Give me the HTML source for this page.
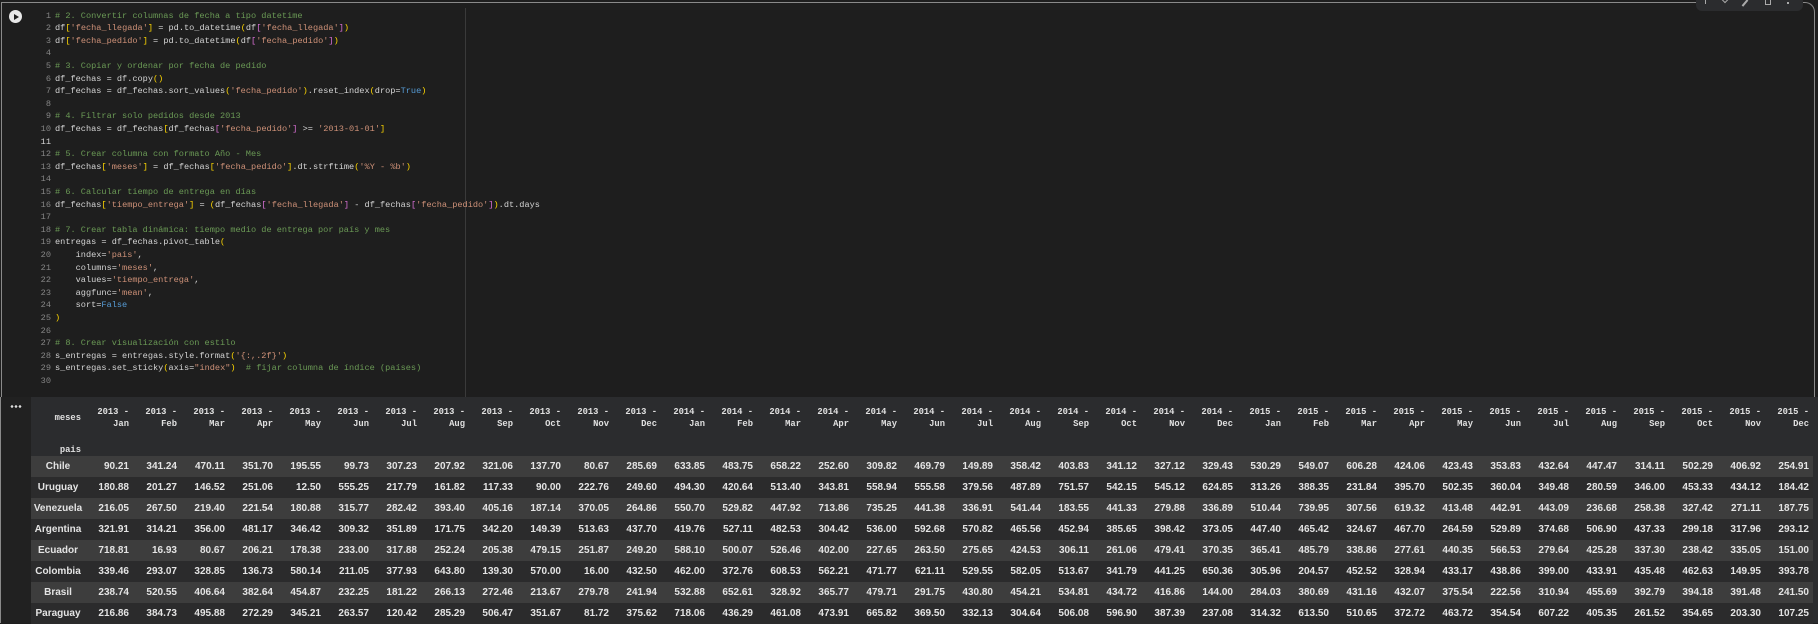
<!DOCTYPE html>
<html><head><meta charset="utf-8">
<style>
*{margin:0;padding:0;box-sizing:border-box}
body{width:1818px;height:623px;background:#1e1e1e;overflow:hidden;position:relative;font-family:"Liberation Sans",sans-serif}
.cell{position:absolute;left:1px;top:2px;width:1814px;height:395px;border:1px solid #8a8a8a;border-bottom:none;border-radius:0 10px 0 0;background:#1e1e1e}
.tb{position:absolute;left:1696px;top:0;width:107px;height:11px;background:#2b2c2e;border-radius:0 0 6px 6px}
.tb span{position:absolute;top:-1px;width:6px;height:6px;border:1.2px solid #aaa;border-top:none}
.run{position:absolute;left:9px;top:10px;width:13px;height:13px;border-radius:50%;background:#e8e8e8}
.run:after{content:"";position:absolute;left:5px;top:3.5px;border-left:5px solid #1e1e1e;border-top:3px solid transparent;border-bottom:3px solid transparent}
.ruler{position:absolute;left:465px;top:8px;width:1px;height:389px;background:#3a3a3a}
.code{position:absolute;left:30px;top:9.7px;font-family:"Liberation Mono",monospace;font-size:8.6px;line-height:12.6px;color:#d4d4d4;white-space:pre}
.ln{display:inline-block;width:21px;text-align:right;color:#858585;margin-right:4px}
.cur{color:#d4d4d4}
.c{color:#6a9955}.s{color:#ce9178}.y{color:#ffd700}.p{color:#da70d6}.b{color:#179fff}.k{color:#569cd6}.f{color:#dcdcaa}
.out{position:absolute;left:0;top:397px;width:1818px;height:226px;background:#212121;border-left:1px solid #8a8a8a}
.dots{position:absolute;left:10px;top:405px;width:12px;height:3px;background:radial-gradient(circle,#ddd 1.2px,transparent 1.4px) 0 0/4px 3px repeat-x}
table{position:absolute;left:31px;top:397px;border-collapse:collapse;background:#2b2c2e}
th,td{padding:0 4px 0 0;text-align:right}
thead th{font-family:"Liberation Mono",monospace;font-size:8.8px;font-weight:bold;color:#e0e0e0;width:48px;vertical-align:top;line-height:12px;padding-top:9px;height:58px}
thead th.ix{width:54px;padding-top:0;vertical-align:top}
tbody td,tbody th{height:21px;font-size:10px;font-weight:bold;color:#e4e4e4}
tbody th{text-align:center;padding:0;width:54px}
tbody tr:nth-child(odd){background:#3d3d3d}
tbody tr:nth-child(even){background:#2b2b2c}
.sb{position:absolute;left:1813px;top:397px;width:5px;height:226px;background:#2b2c2e}
</style></head><body>
<div class="cell"></div>
<div class="tb"><span style="left:9px;border:none;width:1px;background:#aaa;height:5px"></span><span style="left:26px;transform:rotate(45deg);top:-4px"></span><span style="left:48px;border:none;width:2px;height:8px;background:#aaa;transform:rotate(40deg);top:-1px"></span><span style="left:69px;height:5px;top:0"></span><span style="left:91px;border:none;width:2px;height:2px;background:#aaa;top:2px"></span></div>
<div class="run"></div>
<div class="ruler"></div>
<div class="code"><span class="ln">1</span><span class="c"># 2. Convertir columnas de fecha a tipo datetime</span>
<span class="ln">2</span>df<span class="y">[</span><span class="s">'fecha_llegada'</span><span class="y">]</span> = pd.to_datetime<span class="y">(</span>df<span class="p">[</span><span class="s">'fecha_llegada'</span><span class="p">]</span><span class="y">)</span>
<span class="ln">3</span>df<span class="y">[</span><span class="s">'fecha_pedido'</span><span class="y">]</span> = pd.to_datetime<span class="y">(</span>df<span class="p">[</span><span class="s">'fecha_pedido'</span><span class="p">]</span><span class="y">)</span>
<span class="ln">4</span>
<span class="ln">5</span><span class="c"># 3. Copiar y ordenar por fecha de pedido</span>
<span class="ln">6</span>df_fechas = df.copy<span class="y">()</span>
<span class="ln">7</span>df_fechas = df_fechas.sort_values<span class="y">(</span><span class="s">'fecha_pedido'</span><span class="y">)</span>.reset_index<span class="y">(</span>drop=<span class="k">True</span><span class="y">)</span>
<span class="ln">8</span>
<span class="ln">9</span><span class="c"># 4. Filtrar solo pedidos desde 2013</span>
<span class="ln">10</span>df_fechas = df_fechas<span class="y">[</span>df_fechas<span class="p">[</span><span class="s">'fecha_pedido'</span><span class="p">]</span> &gt;= <span class="s">'2013-01-01'</span><span class="y">]</span>
<span class="ln cur">11</span>
<span class="ln">12</span><span class="c"># 5. Crear columna con formato Año - Mes</span>
<span class="ln">13</span>df_fechas<span class="y">[</span><span class="s">'meses'</span><span class="y">]</span> = df_fechas<span class="y">[</span><span class="s">'fecha_pedido'</span><span class="y">]</span>.dt.strftime<span class="y">(</span><span class="s">'%Y - %b'</span><span class="y">)</span>
<span class="ln">14</span>
<span class="ln">15</span><span class="c"># 6. Calcular tiempo de entrega en días</span>
<span class="ln">16</span>df_fechas<span class="y">[</span><span class="s">'tiempo_entrega'</span><span class="y">]</span> = <span class="y">(</span>df_fechas<span class="p">[</span><span class="s">'fecha_llegada'</span><span class="p">]</span> - df_fechas<span class="p">[</span><span class="s">'fecha_pedido'</span><span class="p">]</span><span class="y">)</span>.dt.days
<span class="ln">17</span>
<span class="ln">18</span><span class="c"># 7. Crear tabla dinámica: tiempo medio de entrega por país y mes</span>
<span class="ln">19</span>entregas = df_fechas.pivot_table<span class="y">(</span>
<span class="ln">20</span>    index=<span class="s">'pais'</span>,
<span class="ln">21</span>    columns=<span class="s">'meses'</span>,
<span class="ln">22</span>    values=<span class="s">'tiempo_entrega'</span>,
<span class="ln">23</span>    aggfunc=<span class="s">'mean'</span>,
<span class="ln">24</span>    sort=<span class="k">False</span>
<span class="ln">25</span><span class="y">)</span>
<span class="ln">26</span>
<span class="ln">27</span><span class="c"># 8. Crear visualización con estilo</span>
<span class="ln">28</span>s_entregas = entregas.style.format<span class="y">(</span><span class="s">'{:,.2f}'</span><span class="y">)</span>
<span class="ln">29</span>s_entregas.set_sticky<span class="y">(</span>axis=<span class="s">"index"</span><span class="y">)</span>  <span class="c"># fijar columna de índice (países)</span>
<span class="ln">30</span></div>
<div class="out"></div>
<div class="dots"></div>
<table>
<thead><tr><th class="ix"><div style="margin-top:15px">meses</div><div style="margin-top:20px">pais</div></th>
<th>2013 -<br>Jan</th><th>2013 -<br>Feb</th><th>2013 -<br>Mar</th><th>2013 -<br>Apr</th><th>2013 -<br>May</th><th>2013 -<br>Jun</th><th>2013 -<br>Jul</th><th>2013 -<br>Aug</th><th>2013 -<br>Sep</th><th>2013 -<br>Oct</th><th>2013 -<br>Nov</th><th>2013 -<br>Dec</th>
<th>2014 -<br>Jan</th><th>2014 -<br>Feb</th><th>2014 -<br>Mar</th><th>2014 -<br>Apr</th><th>2014 -<br>May</th><th>2014 -<br>Jun</th><th>2014 -<br>Jul</th><th>2014 -<br>Aug</th><th>2014 -<br>Sep</th><th>2014 -<br>Oct</th><th>2014 -<br>Nov</th><th>2014 -<br>Dec</th>
<th>2015 -<br>Jan</th><th>2015 -<br>Feb</th><th>2015 -<br>Mar</th><th>2015 -<br>Apr</th><th>2015 -<br>May</th><th>2015 -<br>Jun</th><th>2015 -<br>Jul</th><th>2015 -<br>Aug</th><th>2015 -<br>Sep</th><th>2015 -<br>Oct</th><th>2015 -<br>Nov</th><th>2015 -<br>Dec</th></tr></thead>
<tbody>
<tr><th>Chile</th><td>90.21</td><td>341.24</td><td>470.11</td><td>351.70</td><td>195.55</td><td>99.73</td><td>307.23</td><td>207.92</td><td>321.06</td><td>137.70</td><td>80.67</td><td>285.69</td><td>633.85</td><td>483.75</td><td>658.22</td><td>252.60</td><td>309.82</td><td>469.79</td><td>149.89</td><td>358.42</td><td>403.83</td><td>341.12</td><td>327.12</td><td>329.43</td><td>530.29</td><td>549.07</td><td>606.28</td><td>424.06</td><td>423.43</td><td>353.83</td><td>432.64</td><td>447.47</td><td>314.11</td><td>502.29</td><td>406.92</td><td>254.91</td></tr>
<tr><th>Uruguay</th><td>180.88</td><td>201.27</td><td>146.52</td><td>251.06</td><td>12.50</td><td>555.25</td><td>217.79</td><td>161.82</td><td>117.33</td><td>90.00</td><td>222.76</td><td>249.60</td><td>494.30</td><td>420.64</td><td>513.40</td><td>343.81</td><td>558.94</td><td>555.58</td><td>379.56</td><td>487.89</td><td>751.57</td><td>542.15</td><td>545.12</td><td>624.85</td><td>313.26</td><td>388.35</td><td>231.84</td><td>395.70</td><td>502.35</td><td>360.04</td><td>349.48</td><td>280.59</td><td>346.00</td><td>453.33</td><td>434.12</td><td>184.42</td></tr>
<tr><th>Venezuela</th><td>216.05</td><td>267.50</td><td>219.40</td><td>221.54</td><td>180.88</td><td>315.77</td><td>282.42</td><td>393.40</td><td>405.16</td><td>187.14</td><td>370.05</td><td>264.86</td><td>550.70</td><td>529.82</td><td>447.92</td><td>713.86</td><td>735.25</td><td>441.38</td><td>336.91</td><td>541.44</td><td>183.55</td><td>441.33</td><td>279.88</td><td>336.89</td><td>510.44</td><td>739.95</td><td>307.56</td><td>619.32</td><td>413.48</td><td>442.91</td><td>443.09</td><td>236.68</td><td>258.38</td><td>327.42</td><td>271.11</td><td>187.75</td></tr>
<tr><th>Argentina</th><td>321.91</td><td>314.21</td><td>356.00</td><td>481.17</td><td>346.42</td><td>309.32</td><td>351.89</td><td>171.75</td><td>342.20</td><td>149.39</td><td>513.63</td><td>437.70</td><td>419.76</td><td>527.11</td><td>482.53</td><td>304.42</td><td>536.00</td><td>592.68</td><td>570.82</td><td>465.56</td><td>452.94</td><td>385.65</td><td>398.42</td><td>373.05</td><td>447.40</td><td>465.42</td><td>324.67</td><td>467.70</td><td>264.59</td><td>529.89</td><td>374.68</td><td>506.90</td><td>437.33</td><td>299.18</td><td>317.96</td><td>293.12</td></tr>
<tr><th>Ecuador</th><td>718.81</td><td>16.93</td><td>80.67</td><td>206.21</td><td>178.38</td><td>233.00</td><td>317.88</td><td>252.24</td><td>205.38</td><td>479.15</td><td>251.87</td><td>249.20</td><td>588.10</td><td>500.07</td><td>526.46</td><td>402.00</td><td>227.65</td><td>263.50</td><td>275.65</td><td>424.53</td><td>306.11</td><td>261.06</td><td>479.41</td><td>370.35</td><td>365.41</td><td>485.79</td><td>338.86</td><td>277.61</td><td>440.35</td><td>566.53</td><td>279.64</td><td>425.28</td><td>337.30</td><td>238.42</td><td>335.05</td><td>151.00</td></tr>
<tr><th>Colombia</th><td>339.46</td><td>293.07</td><td>328.85</td><td>136.73</td><td>580.14</td><td>211.05</td><td>377.93</td><td>643.80</td><td>139.30</td><td>570.00</td><td>16.00</td><td>432.50</td><td>462.00</td><td>372.76</td><td>608.53</td><td>562.21</td><td>471.77</td><td>621.11</td><td>529.55</td><td>582.05</td><td>513.67</td><td>341.79</td><td>441.25</td><td>650.36</td><td>305.96</td><td>204.57</td><td>452.52</td><td>328.94</td><td>433.17</td><td>438.86</td><td>399.00</td><td>433.91</td><td>435.48</td><td>462.63</td><td>149.95</td><td>393.78</td></tr>
<tr><th>Brasil</th><td>238.74</td><td>520.55</td><td>406.64</td><td>382.64</td><td>454.87</td><td>232.25</td><td>181.22</td><td>266.13</td><td>272.46</td><td>213.67</td><td>279.78</td><td>241.94</td><td>532.88</td><td>652.61</td><td>328.92</td><td>365.77</td><td>479.71</td><td>291.75</td><td>430.80</td><td>454.21</td><td>534.81</td><td>434.72</td><td>416.86</td><td>144.00</td><td>284.03</td><td>380.69</td><td>431.16</td><td>432.07</td><td>375.54</td><td>222.56</td><td>310.94</td><td>455.69</td><td>392.79</td><td>394.18</td><td>391.48</td><td>241.50</td></tr>
<tr><th>Paraguay</th><td>216.86</td><td>384.73</td><td>495.88</td><td>272.29</td><td>345.21</td><td>263.57</td><td>120.42</td><td>285.29</td><td>506.47</td><td>351.67</td><td>81.72</td><td>375.62</td><td>718.06</td><td>436.29</td><td>461.08</td><td>473.91</td><td>665.82</td><td>369.50</td><td>332.13</td><td>304.64</td><td>506.08</td><td>596.90</td><td>387.39</td><td>237.08</td><td>314.32</td><td>613.50</td><td>510.65</td><td>372.72</td><td>463.72</td><td>354.54</td><td>607.22</td><td>405.35</td><td>261.52</td><td>354.65</td><td>203.30</td><td>107.25</td></tr>
</tbody></table>
<div class="sb"></div>
</body></html>
